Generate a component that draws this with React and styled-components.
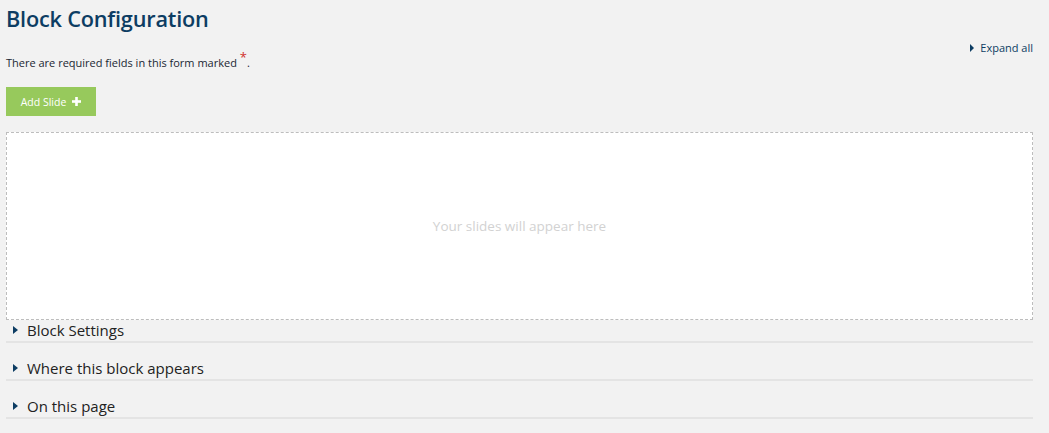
import React from "react";
import styled, { createGlobalStyle } from "styled-components";

const Global = createGlobalStyle`
  html, body { margin: 0; padding: 0; background: #f2f2f2; }
  body { font-family: "Open Sans", "Noto Sans", sans-serif; color: #1f2d3a; }
`;

const Page = styled.div`
  padding: 4px 16px 0 6px;
  display: flex;
  flex-direction: column;
`;

const Title = styled.h1`
  margin: 0;
  font-size: 21.7px;
  font-weight: 600;
  color: #0d3d63;
  line-height: 30px;
  letter-spacing: -0.2px;
`;

const InfoRow = styled.div`
  display: flex;
  justify-content: space-between;
  align-items: flex-start;
  margin-top: 4px;
`;

const Required = styled.p`
  margin: 16px 0 0;
  font-size: 11px;
  color: #1a2733;
  line-height: 16px;
`;

const Star = styled.span`
  color: #d0312d;
  font-size: 13px;
  position: relative;
  top: -5px;
  margin-left: 3px;
`;

const ExpandAll = styled.a`
  display: flex;
  align-items: center;
  gap: 6px;
  font-size: 11px;
  color: #0d3d63;
  line-height: 16px;
  margin-top: 2px;
  cursor: pointer;
`;

const Caret = styled.span`
  display: inline-block;
  width: 0;
  height: 0;
  border-top: ${(p) => p.$size}px solid transparent;
  border-bottom: ${(p) => p.$size}px solid transparent;
  border-left: ${(p) => p.$size + 0.5}px solid #0d3d63;
`;

const AddButton = styled.button`
  align-self: flex-start;
  margin-top: 16px;
  width: 90px;
  height: 29px;
  border: none;
  background: #97c95c;
  color: #fff;
  font-family: inherit;
  font-size: 10.5px;
  display: flex;
  align-items: center;
  justify-content: center;
  gap: 6px;
  padding: 0;
  cursor: pointer;
`;

const DropZone = styled.div`
  margin-top: 16px;
  height: 186px;
  border: 1px dashed #bdbdbd;
  background: #fff;
  display: flex;
  align-items: center;
  justify-content: center;
  color: #d2d2d2;
  font-size: 13.5px;
`;

const Sections = styled.div`
  display: flex;
  flex-direction: column;
  gap: 15px;
`;

const Section = styled.div`
  height: 23px;
  box-sizing: border-box;
  border-bottom: 2px solid #e4e4e4;
  display: flex;
  align-items: flex-start;
  gap: 9px;
  padding: 0 0 0 7px;
  font-size: 15px;
  color: #222;
  line-height: 20px;
`;

const SectionCaret = styled.span`
  margin-top: 6px;
  display: inline-flex;
`;

const Plus = () => (
  <svg width="9" height="9" viewBox="0 0 9 9">
    <rect x="3.2" y="0" width="2.6" height="9" fill="#fff" />
    <rect x="0" y="3.2" width="9" height="2.6" fill="#fff" />
  </svg>
);

export default function App() {
  const sections = ["Block Settings", "Where this block appears", "On this page"];
  return (
    <>
      <Global />
      <Page>
        <Title>Block Configuration</Title>
        <InfoRow>
          <Required>
            There are required fields in this form marked<Star>*</Star>.
          </Required>
          <ExpandAll>
            <Caret $size={4} />
            Expand all
          </ExpandAll>
        </InfoRow>
        <AddButton>
          Add Slide <Plus />
        </AddButton>
        <DropZone>Your slides will appear here</DropZone>
        <Sections>
          {sections.map((s) => (
            <Section key={s}>
              <SectionCaret>
                <Caret $size={4.5} />
              </SectionCaret>
              {s}
            </Section>
          ))}
        </Sections>
      </Page>
    </>
  );
}
